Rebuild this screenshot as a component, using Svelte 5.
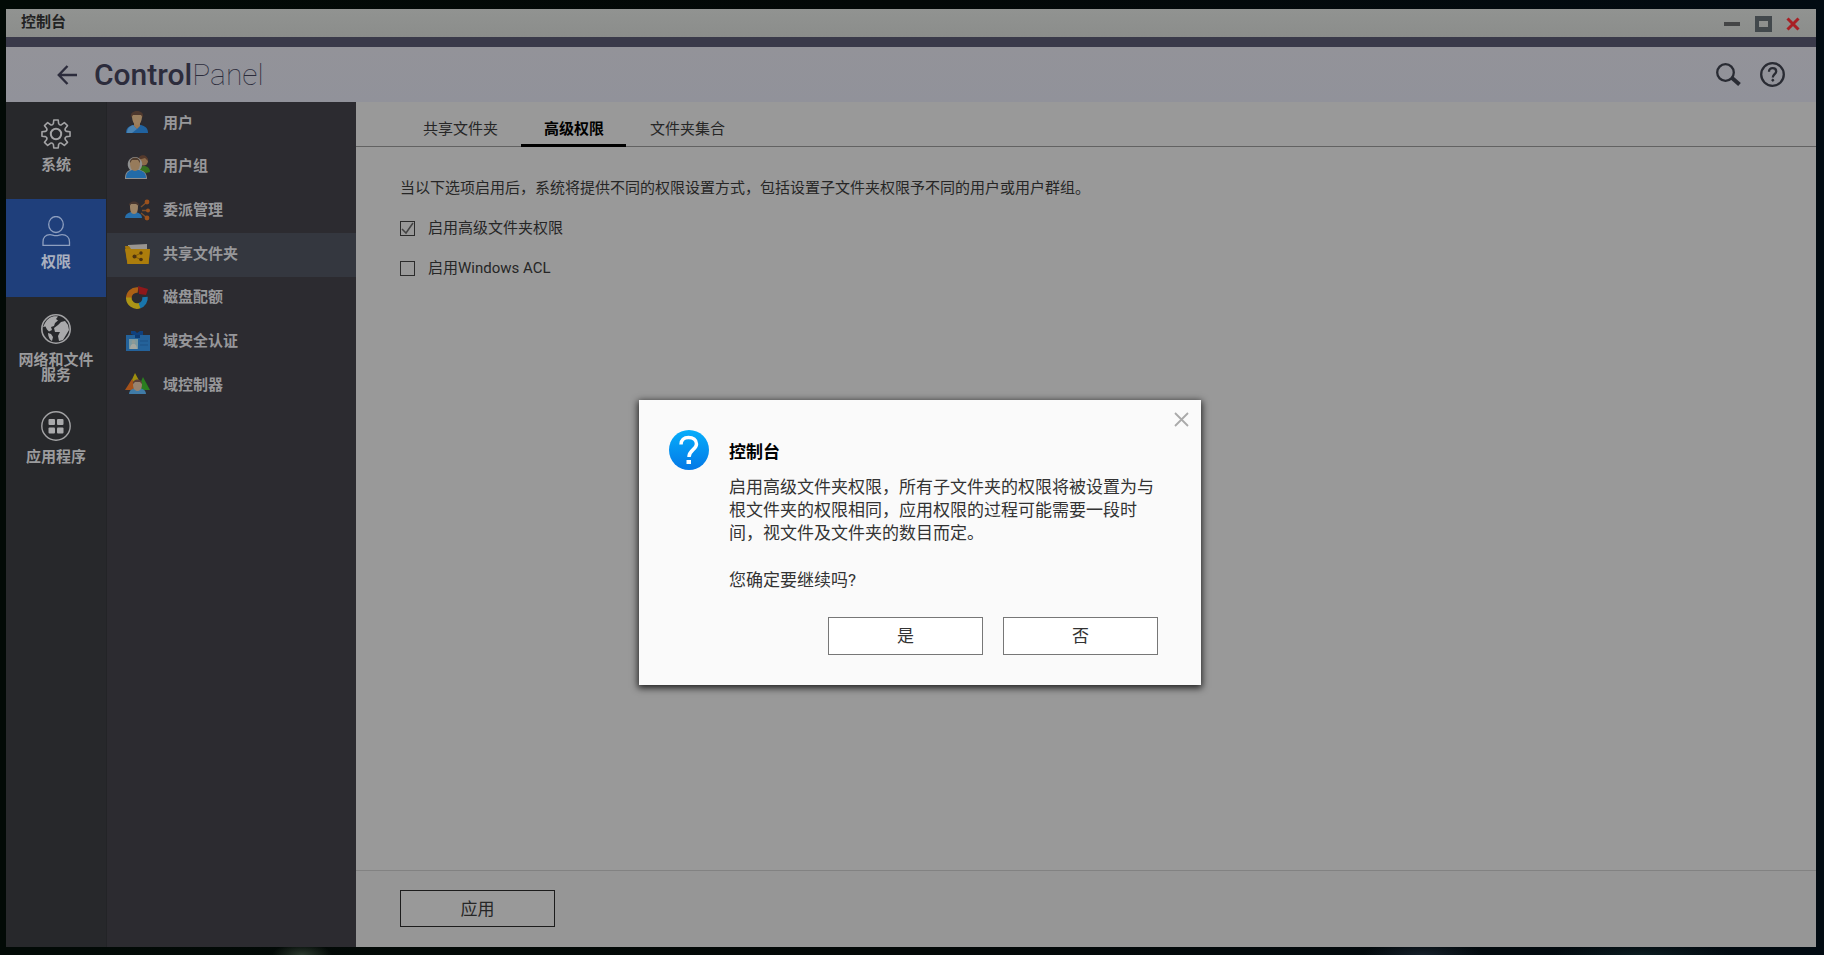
<script>
  const sections = [
    { id: "system", label: "系统" },
    { id: "privilege", label: "权限" },
    { id: "network", label: "网络和文件服务" },
    { id: "apps", label: "应用程序" },
  ];

  const items = [
    { id: "user", label: "用户" },
    { id: "group", label: "用户组" },
    { id: "delegate", label: "委派管理" },
    { id: "share", label: "共享文件夹" },
    { id: "quota", label: "磁盘配额" },
    { id: "domain", label: "域安全认证" },
    { id: "controller", label: "域控制器" },
  ];

  const tabs = ["共享文件夹", "高级权限", "文件夹集合"];

  let section = $state("privilege");
  let item = $state("share");
  let tab = $state(1);
  let advanced = $state(true);
  let acl = $state(false);
  let dialogOpen = $state(true);

  // outline of the gear, eight teeth around 15,15
  const gear = Array.from({ length: 8 }, (_, i) => {
    const at = (r, deg) => {
      const a = ((i * 45 + deg) * Math.PI) / 180;
      return `${(15 + r * Math.sin(a)).toFixed(2)} ${(15 - r * Math.cos(a)).toFixed(2)}`;
    };
    return `${i ? "L" : "M"}${at(10.8, -14)}L${at(14.2, -9)}L${at(14.2, 9)}L${at(10.8, 14)}Q${at(9.2, 22.5)} ${at(10.8, 31)}`;
  }).join("");
</script>

<div class="desktop">
  <div class="window">
    <div class="titlebar">
      <span class="caption">控制台</span>
      <div class="controls">
        <button aria-label="最小化">
          <svg width="17" height="17" viewBox="0 0 17 17"><path d="M0 6h16v4H0z" fill="#444546" /></svg>
        </button>
        <button aria-label="最大化">
          <svg width="17" height="16" viewBox="0 0 17 16">
            <path d="M0 0h17v16H0zM4 5v6h9V5z" fill="#42484c" fill-rule="evenodd" />
          </svg>
        </button>
        <button aria-label="关闭">
          <svg width="14" height="14" viewBox="0 0 14 14">
            <path d="M1.500 1.500l11 11M12.500 1.500l-11 11" stroke="#a81f24" stroke-width="3" />
          </svg>
        </button>
      </div>
    </div>
    <div class="band"></div>

    <header>
      <button aria-label="返回">
        <svg width="20" height="20" viewBox="0 0 20 20" fill="none" stroke="#2c2c3c" stroke-width="2.400">
          <path d="M20 10H2M10.500 1L1.800 10l8.700 9" />
        </svg>
      </button>
      <h1><b>Control</b>Panel</h1>
      <div class="tools">
        <button aria-label="搜索">
          <svg width="25" height="23" viewBox="0 0 25 23" fill="none" stroke="#292b33">
            <circle cx="9.500" cy="9.500" r="8.300" stroke-width="2.300" />
            <path d="M15.500 14.500l8 7" stroke-width="4" />
          </svg>
        </button>
        <button aria-label="帮助">
          <svg width="25" height="25" viewBox="0 0 25 25" fill="none" stroke="#292b33">
            <circle cx="12.500" cy="12.500" r="11.300" stroke-width="2.300" />
            <path d="M9 9.800c0-2.400 1.500-3.700 3.600-3.700s3.600 1.300 3.600 3.300c0 2.600-3.400 2.900-3.400 6" stroke-width="2.300" />
            <circle cx="12.800" cy="18.200" r="1" fill="#292b33" />
          </svg>
        </button>
      </div>
    </header>

    <div class="main">
      <nav class="sections">
        {#each sections as s}
          <button class={{ active: section === s.id }} onclick={() => (section = s.id)}>
            <svg width="30" height="30" viewBox="0 0 30 30" fill="none" stroke="#a3a3a5" stroke-width="1.600">
              {#if s.id === "system"}
                <path d="{gear}Z" stroke-linejoin="round" />
                <circle cx="15" cy="15" r="5.200" stroke-width="2" />
              {:else if s.id === "privilege"}
                <g stroke="#8e9fbf" stroke-width="1.300">
                  <ellipse cx="15" cy="8.500" rx="7.300" ry="8" />
                  <path d="M2 29.300h26.500V26c0-4.500-3-7.300-7.500-7.300-2 0-3.500 1-6 1s-4-1-6-1C4.500 18.700 2 21.500 2 26z" />
                </g>
              {:else if s.id === "network"}
                <circle cx="15" cy="15" r="14.200" />
                <path
                  d="M4 9c3-5 7-7.500 13-6.500l-2 2.500 2 1.500-3 2.500-1 3-3 1 1 3-3 1.500-2-2-1.500-3L2 13zM7 19l3 1 2 3-1 4c-2-1-4-4-4-8zM17 11l3-3 4-1 3 4 1 5-3 5-3 5-4 1-1-5 2-4-5 0-1-4z"
                  fill="#a9a9ab"
                  stroke="none"
                />
              {:else}
                <circle cx="15" cy="15" r="14.200" stroke-width="1.400" />
                <g fill="#a9a9ab" stroke="none">
                  <rect x="7.500" y="8" width="6.500" height="6" rx="1" />
                  <rect x="16" y="8" width="6.500" height="6" rx="1" />
                  <rect x="7.500" y="16.500" width="6.500" height="6" rx="1" />
                  <rect x="16" y="16.500" width="6.500" height="6" rx="1" />
                </g>
              {/if}
            </svg>
            <span>{s.label}</span>
          </button>
        {/each}
      </nav>

      <nav class="items">
        {#each items as it}
          <button class={{ active: item === it.id }} onclick={() => (item = it.id)}>
            <svg width="25" height="25" viewBox="0 0 25 25">
              {#if it.id === "user"}
                <path d="M1 23c0-5 3-7 7-8h8c4 1 7 3 7 8z" fill="#1f68ac" />
                <path d="M2 23c0-5 3-7 6-8l4 4-5 4z" fill="#4f8dc0" />
                <path d="M9 12h6v4l-3 3-3-3z" fill="#a5815a" />
                <path d="M7 6c0-4 2-4 5-4s5 1 5 4c0 5-2 9-5 9s-5-4-5-9z" fill="#a88963" />
                <path d="M6 8c-1-5 2-7 6-7s7 2 6 7l-2-3H8z" fill="#513a2e" />
              {:else if it.id === "group"}
                <path d="M14 17c0-4 2-5 5-5s6 2 6 6l-4 1z" fill="#39781f" />
                <circle cx="18.500" cy="7" r="4.500" fill="#97734e" />
                <path d="M13 6c0-6 10-7 10 1l-3-3z" fill="#593b2b" />
                <path d="M0 25c0-6 2-8 5-9-5-6-1-13 5-13s10 7 5 13c4 1 7 3 7 9z" fill="#9a9b9b" />
                <path d="M1 24c0-5 2-7 6-8h7c4 1 7 3 7 8z" fill="#2272b6" />
                <path d="M5 9c0-7 10-7 10 0 0 5-2 8-5 8s-5-3-5-8z" fill="#a38460" />
                <path d="M5 9c-1-7 11-7 10 0l-2-3H7z" fill="#55402f" />
              {:else if it.id === "delegate"}
                <path d="M0 21c0-3 2-5 6-6h5c4 1 6 3 6 6z" fill="#2777b9" />
                <path d="M5 9c0-5 8-5 8 0 0 5-1 8-4 8s-4-3-4-8z" fill="#a98d6b" />
                <path d="M4 9c-1-6 11-6 10 0l-3-2H6z" fill="#4c3930" />
                <path d="M16 10l6-5M17 13.500h6M16 16l6 5" stroke="#86522a" stroke-width="1.500" />
                <g fill="#a9561a">
                  <circle cx="22" cy="5" r="2.400" />
                  <circle cx="23" cy="13.500" r="2" />
                  <circle cx="22" cy="21" r="2.400" />
                </g>
              {:else if it.id === "share"}
                <path d="M3 4l19-1v6H3z" fill="#a4a09a" />
                <path d="M0 5h4l2 3h19l-1.500 15h-21z" fill="#b17d05" />
                <path d="M0 8h25l-1.500 15h-21z" fill="#b98507" />
                <path d="M16 12l-7 3.500 7 3" stroke="#8d5f05" fill="none" />
                <g fill="#50330b">
                  <circle cx="9.500" cy="15.500" r="2" />
                  <circle cx="16" cy="12" r="1.700" />
                  <circle cx="16" cy="18.500" r="1.800" />
                </g>
              {:else if it.id === "quota"}
                <g fill="none" stroke-width="5.500">
                  <path d="M3.800 14A8.200 8.200 0 0 1 13 5" stroke="#b96613" />
                  <path d="M3.800 12.500A8.200 8.200 0 0 0 15 20.500" stroke="#baa114" />
                  <path d="M14.500 20.700A8.200 8.200 0 0 0 20 12" stroke="#187fba" />
                </g>
                <path d="M13 1l3 1 7 2-2 6-7-1z" fill="#991719" />
              {:else if it.id === "domain"}
                <path d="M6 6V3h4l2 2 3-2h3v4h-3l-3 2-3-2z" fill="#0c4488" />
                <rect x="1" y="7" width="24" height="16" fill="#2469a6" />
                <path d="M10 7h5v3h-5z" fill="#0b3c77" />
                <rect x="4" y="11" width="9" height="10" fill="#83a4ae" />
                <path d="M5 21c0-7 7-7 7 0z" fill="#b2b5ad" />
                <circle cx="8.500" cy="14" r="2" fill="#9aa7a2" />
                <path d="M15 13h8M15 17h8" stroke="#1a568f" />
              {:else}
                <path d="M10 1l7 13H4z" fill="#ac9a0b" />
                <path d="M7 7l6 11H0z" fill="#b45718" />
                <path d="M18 5l7 13H12z" fill="#2b871e" />
                <path d="M4 22c0-3 2-5 6-6h5c4 1 6 3 6 6z" fill="#4384b4" />
                <path d="M8 12c0-5 9-5 9 0 0 5-2 7-4.500 7S8 17 8 12z" fill="#a48c76" />
                <path d="M8 12c-1-6 10-6 9 0l-2-2h-5z" fill="#604239" />
              {/if}
            </svg>
            <span>{it.label}</span>
          </button>
        {/each}
      </nav>

      <section class="content">
        <div class="tabs" role="tablist">
          {#each tabs as name, i}
            <button
              role="tab"
              aria-selected={tab === i}
              class={{ active: tab === i }}
              onclick={() => (tab = i)}
            >
              {name}
            </button>
          {/each}
        </div>
        <div class="options">
          <p>当以下选项启用后，系统将提供不同的权限设置方式，包括设置子文件夹权限予不同的用户或用户群组。</p>
          <label><input type="checkbox" bind:checked={advanced} />启用高级文件夹权限</label>
          <label><input type="checkbox" bind:checked={acl} />启用Windows ACL</label>
        </div>
        <footer>
          <button class="btn" onclick={() => (dialogOpen = true)}>应用</button>
        </footer>
      </section>
    </div>
  </div>

  {#if dialogOpen}
    <div class="dialog" role="alertdialog" aria-labelledby="dialog-title">
      <button class="close" aria-label="关闭对话框" onclick={() => (dialogOpen = false)}>
        <svg width="15" height="15" viewBox="0 0 15 15">
          <path d="M1 1l13 13M14 1L1 14" stroke="#aaa" stroke-width="1.800" />
        </svg>
      </button>
      <svg class="question" width="40" height="40" viewBox="0 0 40 40">
        <defs>
          <linearGradient id="blue" x1="0" y1="0" x2="0" y2="1">
            <stop offset="0" stop-color="#06aefb" />
            <stop offset="1" stop-color="#0478e6" />
          </linearGradient>
        </defs>
        <circle cx="20" cy="20" r="20" fill="url(#blue)" />
        <path
          d="M12 14.500c0-4.500 3-7 7.500-7s8 2.500 8 6.500c0 5.500-7.500 6-7.500 13"
          fill="none"
          stroke="#fff"
          stroke-width="3.500"
        />
        <rect x="17.500" y="30" width="4.500" height="4" fill="#fff" />
      </svg>
      <div class="message">
        <h2 id="dialog-title">控制台</h2>
        <p>启用高级文件夹权限，所有子文件夹的权限将被设置为与根文件夹的权限相同，应用权限的过程可能需要一段时间，视文件及文件夹的数目而定。</p>
        <p>您确定要继续吗?</p>
        <div class="actions">
          <button class="btn" onclick={() => (dialogOpen = false)}>是</button>
          <button class="btn" onclick={() => (dialogOpen = false)}>否</button>
        </div>
      </div>
    </div>
  {/if}
</div>

<style>
  :global(body) {
    margin: 0;
  }
  .desktop {
    position: relative;
    box-sizing: border-box;
    display: flex;
    min-height: 100vh;
    padding: 9px 8px 8px 6px;
    background:
      radial-gradient(ellipse 30px 12px at 302px 100%, #2c3a2e, transparent),
      radial-gradient(ellipse 60px 14px at 78% 100%, #16202a, transparent),
      radial-gradient(ellipse 90px 12px at 90% 100%, #0c1c20, transparent),
      linear-gradient(90deg, #020a06, #030807 50%, #020b12);
    font-family: Roboto, "Noto Sans CJK SC", sans-serif;
    font-size: 15px;
    color: #262626;
  }
  button {
    padding: 0;
    border: none;
    background: none;
    font: inherit;
    color: inherit;
    cursor: pointer;
  }
  svg {
    display: block;
    flex: none;
  }
  h1,
  h2,
  p {
    margin: 0;
  }
  .window {
    flex: 1;
    display: flex;
    flex-direction: column;
  }
  .titlebar {
    display: flex;
    align-items: center;
    justify-content: space-between;
    height: 28px;
    padding: 0 16px 0 15px;
    background: linear-gradient(#919391, #8b8d8b);
  }
  .caption {
    padding-bottom: 2px;
    line-height: 20px;
    font-weight: 700;
    color: #222;
  }
  .controls {
    display: flex;
    align-items: center;
    gap: 14px;
    padding-top: 2px;
  }
  .band {
    height: 10px;
    background: #3a3a4a;
  }
  header {
    display: flex;
    align-items: center;
    height: 55px;
    padding: 0 31px 0 51px;
    background: linear-gradient(#939399, #91929a);
  }
  h1 {
    margin-left: 17px;
    font-size: 30px;
    font-weight: 100;
    line-height: 36px;
    color: #2c2c3c;
  }
  h1 b {
    font-weight: 500;
  }
  .tools {
    display: flex;
    align-items: center;
    gap: 19px;
    margin-left: auto;
  }
  .main {
    flex: 1;
    display: flex;
  }
  .sections,
  .items {
    display: grid;
    align-content: start;
  }
  .sections {
    width: 100px;
    grid-template-rows: 97px 98px 97px 98px;
    background: #27282b;
    color: #9b9b9d;
  }
  .sections button {
    display: flex;
    flex-direction: column;
    align-items: center;
    gap: 9px;
    padding: 17px 11px 0;
    font-weight: 700;
    line-height: 15px;
  }
  .sections .active {
    background: #1f3f7b;
    color: #a9b0bf;
  }
  .items {
    box-sizing: border-box;
    width: 250px;
    grid-template-rows: repeat(3, 44px 43px 44px);
    border-left: 1px solid #232427;
    background: #2c2b30;
    color: #97979a;
  }
  .items button {
    display: flex;
    align-items: center;
    gap: 13px;
    padding: 0 0 3px 18px;
    font-weight: 700;
    line-height: 20px;
  }
  .items svg {
    opacity: 0.9;
  }
  .items .active {
    background: #34373f;
  }
  .content {
    flex: 1;
    display: flex;
    flex-direction: column;
    background: #999;
  }
  .tabs {
    display: flex;
    gap: 1px;
    height: 44px;
    padding-left: 44px;
    border-bottom: 1px solid #626262;
  }
  .tabs button {
    box-sizing: border-box;
    height: 45px;
    padding: 11px 22px 0 23px;
    border-bottom: 3px solid transparent;
    line-height: 20px;
  }
  .tabs .active {
    border-color: #000;
    font-weight: 700;
    color: #000;
  }
  .options {
    flex: 1;
    display: flex;
    flex-direction: column;
    align-items: flex-start;
    gap: 20px;
    padding: 31px 44px 0;
    line-height: 20px;
  }
  label {
    display: flex;
    align-items: center;
    gap: 13px;
  }
  input {
    box-sizing: border-box;
    appearance: none;
    width: 15px;
    height: 15px;
    margin: 0;
    border: 1px solid #2b2b2b;
    background: transparent center / 13px 13px no-repeat;
  }
  input:checked {
    background-image: url("data:image/svg+xml,%3Csvg xmlns='http://www.w3.org/2000/svg' viewBox='0 0 13 13'%3E%3Cpath d='M1 7l4 4 7-10' fill='none' stroke='%23444' stroke-width='1.500'/%3E%3C/svg%3E");
  }
  footer {
    padding: 19px 44px 20px;
    border-top: 1px solid #828282;
    background: #969696;
  }
  .btn {
    box-sizing: border-box;
    width: 155px;
    height: 37px;
    border: 1px solid #1c1c1c;
    background: #999;
    font-size: 17px;
    line-height: 24px;
  }
  .dialog {
    position: absolute;
    top: 400px;
    left: 50%;
    box-sizing: border-box;
    display: flex;
    gap: 20px;
    width: 562px;
    margin-left: -273px;
    padding: 30px 34px 30px 30px;
    background: #fafafa;
    box-shadow: 0 2px 7px 1px rgba(0, 0, 0, 0.8);
    font-size: 17px;
    line-height: 23px;
    color: #333;
  }
  .close {
    position: absolute;
    top: 12px;
    right: 12px;
  }
  .message {
    flex: 1;
  }
  h2 {
    margin: 11px 0 12px;
    font-size: 17px;
    line-height: 23px;
    color: #000;
  }
  .message p {
    margin-bottom: 24px;
  }
  .actions {
    display: flex;
    justify-content: flex-end;
    gap: 20px;
    margin-top: 25px;
    padding-right: 9px;
  }
  .actions .btn {
    height: 38px;
    border-color: #777;
    background: #fff;
  }
</style>
